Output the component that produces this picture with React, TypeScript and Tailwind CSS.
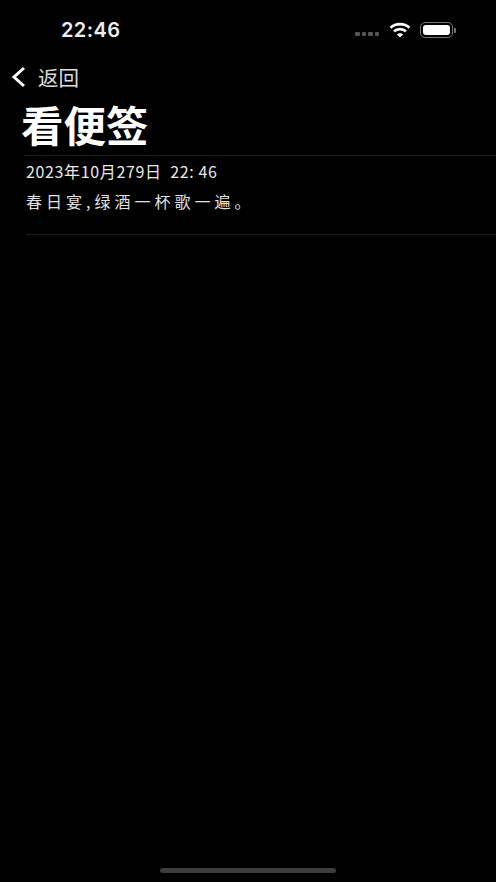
export default function App() {
  const cjk = { fontFamily: '"Noto Sans CJK SC", sans-serif' };
  return (
    <div className="w-[496px] h-[882px] bg-black text-white flex flex-col overflow-hidden font-['Noto_Sans_CJK_SC',sans-serif]">
      <div className="h-[60px] shrink-0 flex items-center pl-[61px] pr-[43px]">
        <span className="text-[20px] font-semibold tracking-[0.4px] text-[#eeeeee] font-['Inter',sans-serif] leading-none">22:46</span>
        <div className="ml-auto flex items-center">
          <div className="flex gap-[2px] mr-[10px] mt-[8px]">
            <span className="w-[4.5px] h-[3.5px] rounded-[1px] bg-[#555]" />
            <span className="w-[4.5px] h-[3.5px] rounded-[1px] bg-[#555]" />
            <span className="w-[4.5px] h-[3.5px] rounded-[1px] bg-[#555]" />
            <span className="w-[4.5px] h-[3.5px] rounded-[1px] bg-[#555]" />
          </div>
          <svg width="22" height="16" viewBox="0 0 22 16" fill="none" className="mr-[9px]">
            <path d="M1.5 5.8C6.8 .9 15.2 .9 20.5 5.8" stroke="#fff" strokeWidth="2.6" />
            <path d="M5 9.4C8.3 6.4 13.7 6.4 17 9.4" stroke="#fff" strokeWidth="2.6" />
            <path d="M11 15.5 7.9 12.4C9.7 10.9 12.3 10.9 14.1 12.4Z" fill="#fff" />
          </svg>
          <div className="relative w-[33px] h-[16px] rounded-[5px] border border-[#777] p-[2px]">
            <div className="w-full h-full rounded-[3px] bg-white" />
            <span className="absolute right-[-3.5px] top-[5px] w-[2px] h-[5px] rounded-r-[1px] bg-[#777]" />
          </div>
        </div>
      </div>
      <div className="h-[36px] shrink-0 flex items-center pl-[11px] pb-[2px]">
        <svg width="16" height="22" viewBox="0 0 16 22" fill="none">
          <path d="M13 2 3 11l10 9" stroke="#fff" strokeWidth="3" />
        </svg>
        <span className="ml-[11px] text-[20.5px] leading-none text-[#dddddd]" style={cjk}>返回</span>
      </div>
      <h1 className="h-[59px] shrink-0 pl-[21px] text-[42.5px] leading-[56px] font-bold" style={cjk}>看便签</h1>
      <div className="ml-[24px] h-px shrink-0 bg-[#1c1c1c]" />
      <div className="ml-[26px] flex flex-col">
        <div className="h-[30px] flex items-center text-[16px] tracking-[0.65px] text-[#e8e8e8]" style={cjk}>2023年10月279日&nbsp;&nbsp;22: 46</div>
        <div className="h-[30px] flex items-center text-[16px] tracking-[4px] text-[#e0e0e0]" style={cjk}>春日宴,绿酒一杯歌一遍。</div>
        <div className="h-[18px]" />
        <div className="h-px bg-[#1c1c1c]" />
      </div>
      <div className="mt-auto mb-[9px] mx-auto w-[176px] h-[5px] rounded-full bg-[#3c3c3c]" />
    </div>
  );
}
